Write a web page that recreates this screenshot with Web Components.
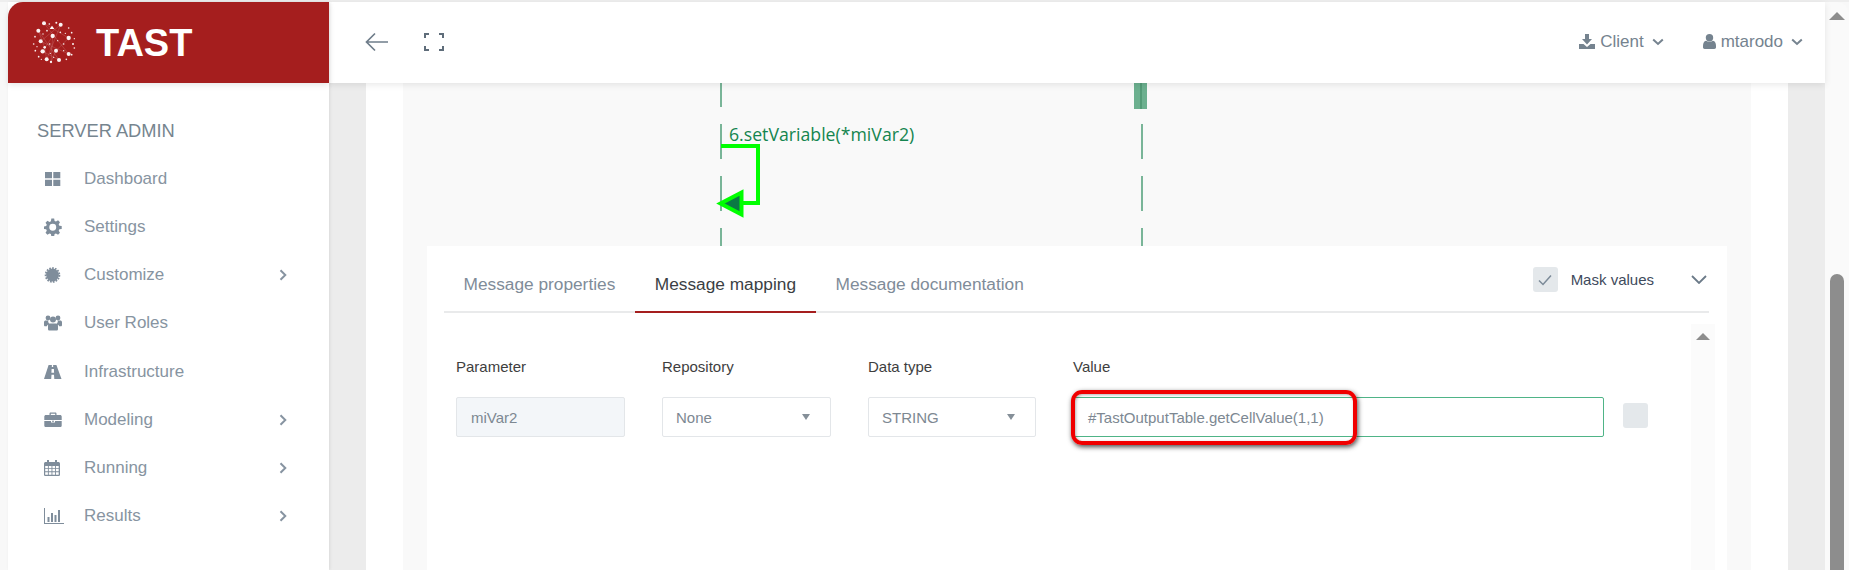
<!DOCTYPE html>
<html>
<head>
<meta charset="utf-8">
<style>
  html, body { margin: 0; height: 570px; overflow: hidden; background: #f8f8f8; }
  body { font-family: "Liberation Sans", Arial, sans-serif; }
</style>
</head>
<body>
<tast-app></tast-app>
<script>
const ICONS = {
  dashboard: '<path d="M1 1h7v6.300H1zM9.300 1h7v6.300h-7zM1 8.700h7V15H1zM9.300 8.700h7V15h-7z"/>',
  settings: '<path fill-rule="evenodd" transform="scale(1.080)" d="M6.800.5h2.600l.4 2.200 1.300.6 1.900-1.200 1.800 1.800-1.200 1.900.6 1.300 2.200.4v2.600l-2.200.4-.6 1.300 1.200 1.900-1.800 1.800-1.900-1.200-1.300.6-.4 2.200H6.800l-.4-2.200-1.300-.6-1.900 1.200-1.800-1.800 1.200-1.900-.6-1.300-2.200-.4V7.900l2.200-.4.6-1.300L1.400 4.300l1.800-1.800 1.900 1.200 1.300-.6zM8.100 5.300a3.200 3.200 0 1 0 0 6.400 3.200 3.200 0 0 0 0-6.400z"/>',
  customize: '<circle cx="8.500" cy="8" r="6.400"/><circle cx="8.500" cy="8" r="6.900" fill="none" stroke="currentColor" stroke-width="1.800" stroke-dasharray="1.700 1.200"/>',
  roles: '<circle cx="4" cy="3" r="2.400"/><circle cx="14" cy="3" r="2.400"/><circle cx="9" cy="4.600" r="3"/><path d="M0 7.200c0-1.200.8-1.800 1.800-1.800h2.400c-.2 1.400.4 2.600 1.400 3.300-1.600.4-2.400 1.400-2.800 2.600H1.200C.4 11.300 0 10.800 0 10zM18 7.200c0-1.200-.8-1.800-1.800-1.800h-2.400c.2 1.400-.4 2.600-1.400 3.300 1.600.4 2.400 1.400 2.800 2.600h1.600c.8 0 1.200-.5 1.200-1.300zM6 8.500h6c1.300 0 2 1 2 2.500v3c0 1-.7 1.500-1.500 1.500h-7C4.700 15.500 4 15 4 14v-3c0-1.500.7-2.500 2-2.500z"/>',
  road: '<path fill-rule="evenodd" d="M4.600 1h3.300l-.1 2h1.400l-.1-2h3.300L17.500 15H10.300l-.3-4.300H7.500L7.200 15H0zM7.600 5l-.2 3.700h2.700L9.900 5z"/>',
  briefcase: '<path fill-rule="evenodd" d="M5.500 3V1.600C5.500.9 6 .5 6.600.5h4.800c.6 0 1.100.4 1.100 1.100V3H16c1 0 1.700.6 1.700 1.600v3.400H.3V4.600C.3 3.600 1 3 2 3zm1.300 0h4.400V1.800H6.800zM.3 9h6.700v1.600h4V9h6.700v4.400c0 1-.7 1.600-1.700 1.600H2c-1 0-1.700-.6-1.700-1.600zM8 8.800h2v1H8z"/>',
  calendar: '<path fill-rule="evenodd" d="M3 0h2v2h6V0h2v2h1.300C15.300 2 16 2.700 16 3.700v11C16 15.500 15.300 16 14.500 16h-13C.7 16 0 15.500 0 14.700v-11C0 2.700.7 2 1.700 2H3zM1.200 6v2.200h2.700V6zm3.600 0v2.200h2.700V6zm3.600 0v2.200h2.700V6zm3.600 0v2.200h2.700V6zM1.200 9.100v2.200h2.700V9.100zm3.600 0v2.200h2.700V9.100zm3.600 0v2.200h2.700V9.100zm3.600 0v2.200h2.700V9.100zM1.200 12.200v2.600h2.700v-2.600zm3.600 0v2.600h2.700v-2.600zm3.600 0v2.600h2.700v-2.600zm3.600 0v2.600h2.700v-2.600z"/>',
  results: '<path d="M0 0h1v15h19v1H0zM3.500 9h2v5h-2zM7 5h2v9H7zM10.500 7h2v7h-2zM14 2h2v12h-2z"/>'
};

const LOGO_DOTS = [
  [131,78,6],[181,82,6],[114,100,6],[157,116,6.500],[205,122,6.500],[121,132,6],[133,150,4],[127,162,6.500],
  [167,160,6],[205,170,6],[139,186,6],[176,188,6],[152,194,3.500],[218,140,3],[100,140,2.500],[168,76,3],
  [147,80,2.500],[104,118,2.500],[205,92,2.500],[214,106,2.500],[222,124,2],[222,152,2.500],[214,172,2.500],
  [198,186,2.500],[160,180,2],[115,178,2.500],[105,160,2.500],[140,100,2.500],[180,105,2.500],[190,140,2.500],
  [148,140,2.500],[110,148,2],[190,160,2],[128,110,2],[195,108,2],[172,130,2],[150,168,2],[123,186,2]
];

class TastLogo extends HTMLElement {
  connectedCallback() {
    const dots = LOGO_DOTS.map(d => `<circle cx="${d[0]}" cy="${d[1]}" r="${d[2]}"/>`).join('');
    const links = LOGO_DOTS.slice(0, 13).map((d, i) => {
      const n = LOGO_DOTS[(i + 4) % 13];
      return `<line x1="${d[0]}" y1="${d[1]}" x2="${n[0]}" y2="${n[1]}"/>`;
    }).join('');
    this.attachShadow({ mode: 'open' });
    this.shadowRoot.innerHTML = `
      <style>:host { display: block; width: 44px; height: 45px; } svg { display: block; }</style>
      <svg width="44" height="45" viewBox="95 68 132 135">
        <g stroke="#fff" stroke-opacity=".28" stroke-width="1.500">${links}</g>
        <g fill="#fff" fill-opacity=".95">${dots}</g>
        <path d="M155 85l7 10h-14z" fill="#fff"/>
      </svg>`;
  }
}

class NavItem extends HTMLElement {
  connectedCallback() {
    const name = this.getAttribute('icon');
    const w = name === 'results' ? 20 : 18;
    const h = name === 'settings' ? 18 : 16;
    const arrow = this.hasAttribute('arrow')
      ? '<svg class="arrow" width="8" height="12" viewBox="0 0 8 12"><path d="M1.500 1.200L6.300 6l-4.800 4.800" fill="none" stroke="currentColor" stroke-width="2"/></svg>'
      : '';
    this.attachShadow({ mode: 'open' });
    this.shadowRoot.innerHTML = `
      <style>
        :host { display: flex; align-items: center; height: 48.14px; padding-left: 36px; color: #8794a1; font-size: 17px; }
        .ico { width: 40px; display: flex; align-items: center; color: #7f8d9b; }
        .label { flex: 1; }
        .arrow { margin-right: 42px; color: #8794a1; }
      </style>
      <div class="ico"><svg width="${w}" height="${h}" viewBox="0 0 ${w} ${h}" fill="currentColor">${ICONS[name]}</svg></div>
      <div class="label"><slot></slot></div>
      ${arrow}`;
  }
}

class SideBar extends HTMLElement {
  connectedCallback() {
    this.attachShadow({ mode: 'open' });
    this.shadowRoot.innerHTML = `
      <style>
        :host { display: flex; flex-direction: column; width: 321px; background: #fff; box-shadow: 1px 0 3px rgba(0,0,0,.08); position: relative; z-index: 3; }
        .brand { height: 81px; background: #a51e1e; border-top-left-radius: 15px; display: flex; align-items: center; padding-left: 24px; gap: 20px; box-shadow: 0 2px 6px rgba(0,0,0,.1); box-sizing: border-box; }
        .brand span { color: #fff; font-weight: bold; font-size: 38px; line-height: 1; }
        .title { color: #76858f; font-size: 18.300px; padding: 38px 0 0 29px; line-height: 20px; height: 33px; }
        nav { display: block; padding-top: 1px; }
      </style>
      <div class="brand"><tast-logo></tast-logo><span>TAST</span></div>
      <div class="title">SERVER ADMIN</div>
      <nav>
        <nav-item icon="dashboard">Dashboard</nav-item>
        <nav-item icon="settings">Settings</nav-item>
        <nav-item icon="customize" arrow>Customize</nav-item>
        <nav-item icon="roles">User Roles</nav-item>
        <nav-item icon="road">Infrastructure</nav-item>
        <nav-item icon="briefcase" arrow>Modeling</nav-item>
        <nav-item icon="calendar" arrow>Running</nav-item>
        <nav-item icon="results" arrow>Results</nav-item>
      </nav>`;
  }
}

class TopBar extends HTMLElement {
  connectedCallback() {
    const chev = '<svg width="12" height="8" viewBox="0 0 12 8"><path d="M1.200 1.500L6 6l4.800-4.500" fill="none" stroke="currentColor" stroke-width="2"/></svg>';
    this.attachShadow({ mode: 'open' });
    this.shadowRoot.innerHTML = `
      <style>
        :host { display: flex; align-items: center; height: 81px; box-sizing: border-box; padding: 0 22px 2px 36px; background: #fff; box-shadow: 0 2px 7px rgba(0,0,0,.09); position: relative; z-index: 2; color: #75838f; font-size: 17px; flex: none; }
        .left { display: flex; gap: 35px; align-items: center; flex: 1; }
        .menu { display: flex; align-items: center; }
        .client { margin-right: 39px; }
        svg { display: block; }
        span { margin: 0 8px 0 5px; }
      </style>
      <div class="left">
        <svg width="24" height="20" viewBox="0 0 24 20" fill="none" stroke="#6f7d8a" stroke-width="1.700"><path d="M23 10H2M10 1.500L1.500 10l8.500 8.500"/></svg>
        <svg width="20" height="18" viewBox="0 0 20 18" fill="none" stroke="#5f6d7a" stroke-width="2"><path d="M1 5V1h4M15 1h4v4M19 13v4h-4M5 17H1v-4"/></svg>
      </div>
      <div class="menu client">
        <svg width="16" height="15" viewBox="0 0 16 15" fill="currentColor"><path d="M6 0h4v5h3L8 10.500 3 5h3zM0 10h4.500L8 13l3.500-3H16v5H0z"/></svg>
        <span>Client</span>${chev}
      </div>
      <div class="menu">
        <svg width="13" height="15" viewBox="0 0 13 15" fill="currentColor"><circle cx="6.500" cy="3.800" r="3.700"/><path d="M3 6.800c1 .7 2.200 1 3.500 1s2.500-.3 3.500-1c2 .4 3 2.200 3 5.200v1.300c0 1-.7 1.700-1.700 1.700H1.700C.7 15 0 14.300 0 13.300V12c0-3 1-4.800 3-5.200z"/></svg>
        <span>mtarodo</span>${chev}
      </div>`;
  }
}

class SeqDiagram extends HTMLElement {
  connectedCallback() {
    this.attachShadow({ mode: 'open' });
    // the canvas viewBox uses page coordinates
    this.shadowRoot.innerHTML = `
      <style>:host { display: block; height: 163px; } svg { display: block; }
        text { font-family: "Open Sans", sans-serif; font-size: 17.700px; fill: #14854f; }</style>
      <svg width="1348" height="163" viewBox="403 83 1348 163">
        <g stroke="#4f9f78" stroke-width="1.500">
          <path d="M721 83v24M721 124v35M721 176v35M721 228v18"/>
          <path d="M1142 124v35M1142 176v35M1142 228v18"/>
        </g>
        <rect x="1134" y="83" width="13" height="26" fill="#6cb08f"/>
        <path d="M1141 83v26" stroke="#4b946f" stroke-width="1.500"/>
        <text x="729" y="141">6.setVariable(*miVar2)</text>
        <path d="M721 146h37v57h-26" fill="none" stroke="#00ff00" stroke-width="4"/>
        <path d="M741.500 192.500v22l-21-11z" fill="#0a7a44" stroke="#00ff00" stroke-width="4"/>
      </svg>`;
  }
}

class TabBar extends HTMLElement {
  connectedCallback() {
    this.attachShadow({ mode: 'open' });
    this.shadowRoot.innerHTML = `
      <style>
        :host { display: flex; align-items: flex-end; height: 65px; margin: 0 18px 0 17px; border-bottom: 2px solid #e9eaeb; color: #7f8c99; }
        ::slotted(tab-item) { margin-bottom: -2px; }
      </style>
      <slot></slot>`;
  }
}

class TabItem extends HTMLElement {
  connectedCallback() {
    this.attachShadow({ mode: 'open' });
    this.shadowRoot.innerHTML = `
      <style>
        :host { display: block; padding: 0 19.500px 18px; font-size: 17.300px; line-height: 18px; color: #7f8c99; border-bottom: 2px solid transparent; margin-bottom: -2px; }
        :host([active]) { color: #3b3f44; border-bottom-color: #a51e1e; padding: 0 20px 18px; }
      </style>
      <slot></slot>`;
  }
}

class FormField extends HTMLElement {
  connectedCallback() {
    const type = this.getAttribute('type');
    const caret = type === 'select'
      ? '<svg width="8" height="6" viewBox="0 0 8 6"><path d="M0 0h8L4 6z" fill="#858f98"/></svg>' : '';
    this.attachShadow({ mode: 'open' });
    this.shadowRoot.innerHTML = `
      <style>
        :host { display: block; font-size: 15px; }
        label { display: block; color: #3e3e3e; line-height: 16px; margin-bottom: 22px; }
        .box { height: 40px; box-sizing: border-box; border: 1px solid #e3e6e9; border-radius: 2px; display: flex; align-items: center; justify-content: space-between; padding: 0 20px 0 14px; color: #7d8892; background: #fff; }
        :host([type=select]) .box { padding-left: 13px; }
        :host([type=readonly]) .box { background: #f3f6f9; }
        :host([type=value]) .box { border-color: #4fb487; }
      </style>
      <label>${this.getAttribute('label')}</label>
      <div class="box"><slot></slot>${caret}</div>`;
  }
}

class MappingPanel extends HTMLElement {
  connectedCallback() {
    this.attachShadow({ mode: 'open' });
    this.shadowRoot.innerHTML = `
      <style>
        :host { display: block; background: #fff; position: relative; height: 324px; }
        .tools { position: absolute; right: 20px; top: 21px; display: flex; align-items: center; font-size: 15px; color: #3e4a5c; }
        .check { width: 25px; height: 25px; background: #e4e8eb; border-radius: 3px; display: flex; align-items: center; justify-content: center; margin-right: 13px; }
        .tools .down { margin-left: 37px; }
        form { display: grid; grid-template-columns: 169px 169px 168px 531px 25px; column-gap: 37px; padding: 46px 0 0 29px; align-items: start; }
        .square { width: 25px; height: 25px; background: #e4e8eb; border-radius: 3px; margin: 44px 0 0 -18px; }
        .scroll { position: absolute; left: 1264px; top: 78px; bottom: 0; width: 24px; background: #fbfbfb; }
        .scroll::before { content: ""; position: absolute; left: 5px; top: 9px; border: 7px solid transparent; border-top: 0; border-bottom: 7px solid #8d8d8d; }
        .mark { position: absolute; left: 644px; top: 144px; width: 286px; height: 55px; box-sizing: border-box; border: 4px solid #f00000; border-radius: 11px; box-shadow: 1px 2px 5px rgba(0,0,0,.7), inset 1px 1px 3px rgba(0,0,0,.3); }
      </style>
      <tab-bar>
        <tab-item>Message properties</tab-item>
        <tab-item active>Message mapping</tab-item>
        <tab-item>Message documentation</tab-item>
      </tab-bar>
      <div class="tools">
        <div class="check"><svg width="14" height="12" viewBox="0 0 14 12"><path d="M1 6.500L5 10.500 13 1.500" fill="none" stroke="#7b8a98" stroke-width="1.500"/></svg></div>
        <span>Mask values</span>
        <svg class="down" width="16" height="9" viewBox="0 0 16 9"><path d="M1 1l7 7 7-7" fill="none" stroke="#6b7a88" stroke-width="1.800"/></svg>
      </div>
      <form>
        <form-field label="Parameter" type="readonly">miVar2</form-field>
        <form-field label="Repository" type="select">None</form-field>
        <form-field label="Data type" type="select">STRING</form-field>
        <form-field label="Value" type="value">#TastOutputTable.getCellValue(1,1)</form-field>
        <div class="square"></div>
      </form>
      <div class="scroll"></div>
      <div class="mark"></div>`;
  }
}

class TastApp extends HTMLElement {
  connectedCallback() {
    this.attachShadow({ mode: 'open' });
    this.shadowRoot.innerHTML = `
      <style>
        :host { display: flex; height: 570px; box-sizing: border-box; padding: 2px 0 0 8px; background: linear-gradient(#eeeeee 2px, #f8f8f8 2px); overflow: hidden; }
        .main { flex: 1; display: flex; flex-direction: column; min-width: 0; }
        .content { flex: 1; background: #ececec; padding: 0 37px; display: flex; min-height: 0; }
        .card { flex: 1; background: #fff; padding: 0 37px; display: flex; min-width: 0; }
        .canvas { flex: 1; background: #f9f9f9; min-width: 0; }
        .panel-wrap { padding: 0 24px; }
        .bar { width: 24px; background: #fafafa; border-top-right-radius: 12px; position: relative; flex: none; }
        .bar::before { content: ""; position: absolute; left: 4px; top: 10px; border: 8px solid transparent; border-top: 0; border-bottom: 8px solid #8d8d8d; }
        .bar::after { content: ""; position: absolute; left: 5px; top: 272px; bottom: -8px; width: 14px; border-radius: 7px; background: #8d8d8d; }
      </style>
      <side-bar></side-bar>
      <div class="main">
        <top-bar></top-bar>
        <div class="content"><div class="card"><div class="canvas">
          <seq-diagram></seq-diagram>
          <div class="panel-wrap"><mapping-panel></mapping-panel></div>
        </div></div></div>
      </div>
      <div class="bar"></div>`;
  }
}

customElements.define('tast-logo', TastLogo);
customElements.define('nav-item', NavItem);
customElements.define('side-bar', SideBar);
customElements.define('top-bar', TopBar);
customElements.define('seq-diagram', SeqDiagram);
customElements.define('tab-bar', TabBar);
customElements.define('tab-item', TabItem);
customElements.define('form-field', FormField);
customElements.define('mapping-panel', MappingPanel);
customElements.define('tast-app', TastApp);
</script>
</body>
</html>
